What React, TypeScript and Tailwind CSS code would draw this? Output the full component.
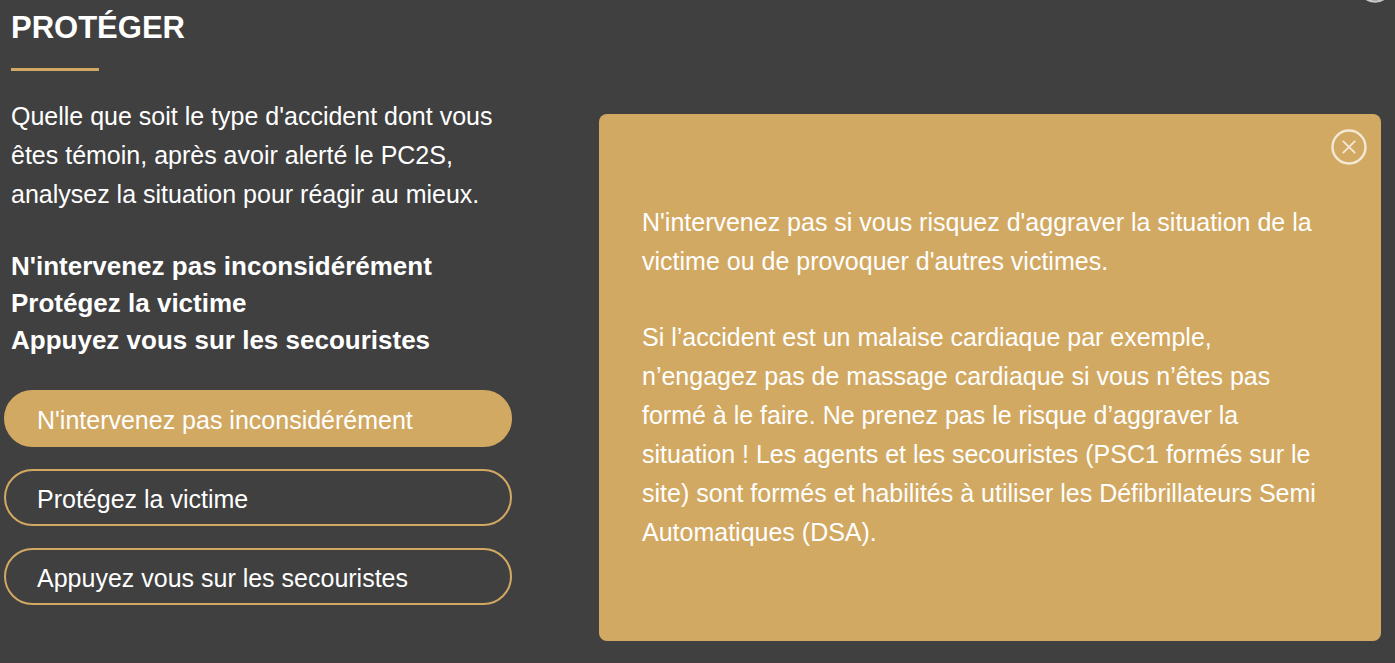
const topics = ["N'intervenez pas inconsidérément", "Protégez la victime", "Appuyez vous sur les secouristes"];

export default function App() {
  return (
    <main className="relative flex min-h-screen items-start overflow-hidden border-b border-[#463e43] bg-[#404040] pr-[14px] font-['Liberation_Sans',Arial,sans-serif] text-[25px] text-white">
      <button type="button" aria-label="Quitter" className="absolute -top-[33px] right-[2px] size-9">
        <svg viewBox="0 0 36 36" className="size-9" fill="none" stroke="#c8c8c8">
          <circle cx="18" cy="18" r="16.5" strokeWidth="2.4" />
        </svg>
      </button>
      <section className="w-[512px] shrink-0 pt-[9px] pl-1">
        <div className="pl-[7px]">
          <h1 className="text-[31px] leading-[38px] font-bold">PROTÉGER</h1>
          <div className="mt-[21px] h-[3px] w-[88px] bg-[#d2a962]" />
          <p className="mt-[26px] leading-[39px]">
            Quelle que soit le type d'accident dont vous<br />êtes témoin, après avoir alerté le PC2S,<br />analysez la situation pour réagir au mieux.
          </p>
          <ul className="mt-[34px] text-[26px] leading-[37px] font-bold whitespace-nowrap">
            {topics.map((t) => <li key={t}>{t}</li>)}
          </ul>
        </div>
        <div className="mt-[31px] flex flex-col gap-[22px]">
          {topics.map((t, i) => (
            <button key={t} type="button" className={`h-[57px] rounded-full border-2 border-[#d2a962] px-[31px] pt-1 text-left whitespace-nowrap ${i === 0 ? "bg-[#d2a962]" : ""}`}>
              {t}
            </button>
          ))}
        </div>
      </section>
      <article className="relative mt-[114px] ml-[87px] min-h-[527px] flex-1 rounded-lg bg-[#d2a962] pt-[89px] pr-[40px] pl-[43px]">
        <button type="button" aria-label="Fermer" className="absolute top-[15px] right-[14px] size-9">
          <svg viewBox="0 0 36 36" className="size-9" fill="none" stroke="#f4e9d6">
            <circle cx="18" cy="18" r="16.5" strokeWidth="2.4" />
            <path d="M11.8 11.8l12.4 12.4M24.2 11.8l-12.4 12.4" strokeWidth="1.8" />
          </svg>
        </button>
        <p className="leading-[39px]">N'intervenez pas si vous risquez d'aggraver la situation de la<br />victime ou de provoquer d'autres victimes.</p>
        <p className="mt-[37px] leading-[39px]">
          Si l’accident est un malaise cardiaque par exemple,<br />n’engagez pas de massage cardiaque si vous n’êtes pas<br />formé à le faire. Ne prenez pas le risque d’aggraver la<br />situation ! Les agents et les secouristes (PSC1 formés sur le<br />site) sont formés et habilités à utiliser les Défibrillateurs Semi<br />Automatiques (DSA).
        </p>
      </article>
    </main>
  );
}
